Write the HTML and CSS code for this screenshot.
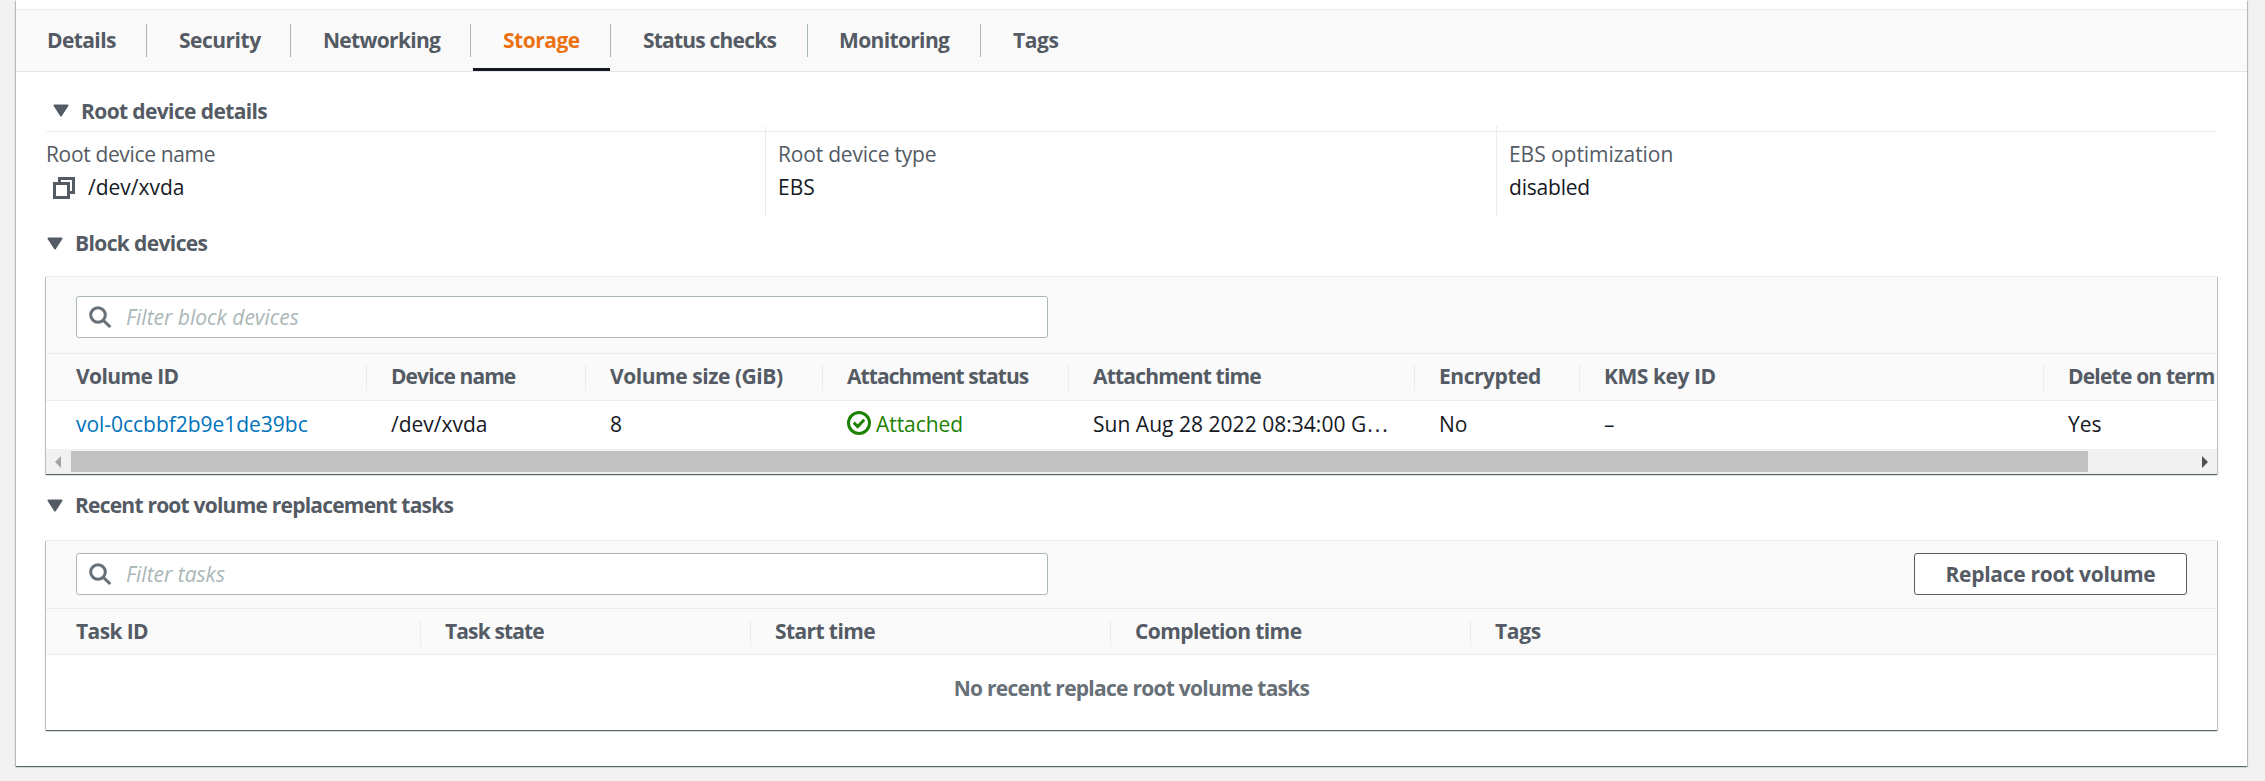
FILE: index.html
```html
<!DOCTYPE html>
<html lang="en">
<head>
<meta charset="utf-8">
<title>Instance storage</title>
<link rel="stylesheet" href="styles.css">
</head>
<body>
<main class="card">
  <nav class="tabs">
    <a class="tab tab-details"><span>Details</span></a>
    <a class="tab tab-security"><span>Security</span></a>
    <a class="tab tab-networking"><span>Networking</span></a>
    <a class="tab tab-storage active"><span>Storage</span></a>
    <a class="tab tab-status"><span>Status checks</span></a>
    <a class="tab tab-monitoring"><span>Monitoring</span></a>
    <a class="tab tab-tags"><span>Tags</span></a>
  </nav>

  <div class="content">
    <h2 class="title title-root"><svg class="caret" viewBox="0 0 16 12"><path d="M1.5 1h13L8 11z"/></svg><span>Root device details</span></h2>
    <dl class="facts">
      <div class="fact">
        <dt class="f-name">Root device name</dt>
        <dd class="copyable"><svg class="copy" viewBox="0 0 22 22"><path d="M6.5 6V1.5h14v14H16"/><path d="M1.5 6.500h14v14h-14z"/></svg><span class="dev">/dev/xvda</span></dd>
      </div>
      <div class="fact">
        <dt class="f-type">Root device type</dt>
        <dd class="ebs">EBS</dd>
      </div>
      <div class="fact">
        <dt class="f-opt">EBS optimization</dt>
        <dd class="disabled">disabled</dd>
      </div>
    </dl>

    <h2 class="title title-block"><svg class="caret" viewBox="0 0 16 12"><path d="M1.500 1h13L8 11z"/></svg><span>Block devices</span></h2>
    <section class="panel panel-block">
      <div class="toolbar">
        <div class="search"><svg class="lens" viewBox="0 0 23 22"><circle cx="9" cy="9" r="7.300"/><path d="M14.300 14.300l7 6.700"/></svg><span class="ph-block">Filter block devices</span></div>
      </div>
      <div class="row head cols-block">
        <div class="th"><span class="h-vol">Volume ID</span></div>
        <div class="th"><span class="h-dev">Device name</span></div>
        <div class="th"><span class="h-size">Volume size (GiB)</span></div>
        <div class="th"><span class="h-status">Attachment status</span></div>
        <div class="th"><span class="h-time">Attachment time</span></div>
        <div class="th"><span class="h-enc">Encrypted</span></div>
        <div class="th"><span class="h-kms">KMS key ID</span></div>
        <div class="th"><span class="h-del">Delete on term</span></div>
      </div>
      <div class="row data cols-block">
        <div class="td"><a class="link">vol-0ccbbf2b9e1de39bc</a></div>
        <div class="td"><span class="dev">/dev/xvda</span></div>
        <div class="td">8</div>
        <div class="td ok"><svg class="check" viewBox="0 0 24 24"><circle cx="12" cy="12" r="10.500"/><path d="M6.800 11.600l3.900 3.900 6.500-6.700"/></svg><span class="attached">Attached</span></div>
        <div class="td"><span class="date">Sun Aug 28 2022 08:34:00 G<span class="dots">...</span></span></div>
        <div class="td">No</div>
        <div class="td">–</div>
        <div class="td">Yes</div>
      </div>
      <div class="scrollbar">
        <svg class="arrow" viewBox="0 0 6 12"><path fill="#a3a3a3" d="M6 0v12L0 6z"/></svg>
        <div class="track"><div class="thumb"></div></div>
        <svg class="arrow" viewBox="0 0 6 12"><path fill="#505050" d="M0 0v12l6-6z"/></svg>
      </div>
    </section>

    <h2 class="title title-recent"><svg class="caret" viewBox="0 0 16 12"><path d="M1.500 1h13L8 11z"/></svg><span>Recent root volume replacement tasks</span></h2>
    <section class="panel panel-tasks">
      <div class="toolbar">
        <div class="search"><svg class="lens" viewBox="0 0 23 22"><circle cx="9" cy="9" r="7.300"/><path d="M14.300 14.300l7 6.700"/></svg><span class="ph-tasks">Filter tasks</span></div>
        <button class="button" type="button">Replace root volume</button>
      </div>
      <div class="row head cols-tasks">
        <div class="th"><span class="h-task">Task ID</span></div>
        <div class="th"><span class="h-state">Task state</span></div>
        <div class="th"><span class="h-start">Start time</span></div>
        <div class="th"><span class="h-comp">Completion time</span></div>
        <div class="th"><span class="h-tags">Tags</span></div>
      </div>
      <div class="empty"><span>No recent replace root volume tasks</span></div>
    </section>
  </div>
</main>
</body>
</html>
```

FILE: styles.css
```css
* { box-sizing: border-box; }
body {
  margin: 0;
  height: 781px;
  overflow: hidden;
  background: #f2f2f2;
  color: #16191f;
  font-family: "Open Sans", "Noto Sans", sans-serif;
  font-size: 21px;
  line-height: 30px;
  white-space: nowrap;
}
.card {
  width: 2231px;
  height: 766px;
  margin-left: 16px;
  padding-top: 9px;
  background: #fff;
  box-shadow: 0 1px 1px rgba(0, 28, 36, .45), 1px 1px 1px rgba(0, 28, 36, .2), -1px 1px 1px rgba(0, 28, 36, .2);
}
.tabs {
  display: flex;
  height: 63px;
  background: #fafafa;
  border-top: 1px solid #eaeded;
  border-bottom: 1px solid #e4e7e7;
  color: #545b64;
  font-weight: 660;
}
.tab {
  display: flex;
  position: relative;
  height: 61px;
  padding: 15px 0 0 32px;
  letter-spacing: -.5px;
}
.tab:not(:last-child)::after {
  content: "";
  position: absolute;
  right: 0;
  top: 14px;
  width: 1px;
  height: 33px;
  background: #aab7b8;
}
.tab-details { width: 131px; padding-left: 31px; letter-spacing: -.6px; }
.tab-security { width: 144px; }
.tab-networking { width: 180px; letter-spacing: -.7px; }
.tab-storage { width: 140px; }
.tab-status { width: 197px; letter-spacing: -.8px; }
.tab-monitoring { width: 173px; padding-left: 31px; letter-spacing: -.65px; }
.tab-tags { letter-spacing: -.4px; }
.tab.active { color: #ec7211; }
.tab.active::before {
  content: "";
  position: absolute;
  left: 2px;
  right: 1px;
  bottom: 0;
  height: 3px;
  background: #16191f;
}
.content { padding: 0 30px; }
.title {
  display: flex;
  align-items: center;
  margin: 0;
  height: 30px;
  color: #545b64;
  font-size: 21px;
  font-weight: 660;
  letter-spacing: -.62px;
}
.caret { width: 16px; height: 13px; margin: 0 12px 0 1px; fill: #545b64; stroke: #545b64; stroke-width: 2; stroke-linejoin: round; }
.title-root { height: 60px; padding: 19px 0 1px 6px; border-bottom: 1px solid #eaeded; }
.facts {
  display: grid;
  grid-template-columns: 719px 731px 1fr;
  height: 90px;
  margin: -6px 0 0;
}
.fact { padding: 13px 0 0 12px; border-left: 1px solid #eaeded; }
.fact:first-child { padding-left: 0; border-left: 0; }
dt { height: 33px; color: #545b64; }
dd { display: flex; margin: 0; }
.f-name { letter-spacing: -.35px; }
.f-type { letter-spacing: -.2px; }
.f-opt { letter-spacing: -.05px; }
.disabled { letter-spacing: -.2px; }
.copy { width: 22px; height: 22px; margin: 5px 13px 0 7px; fill: none; stroke: #545b64; stroke-width: 3; }
.title-block { margin-top: 12px; }
.title-recent { margin-top: 16px; letter-spacing: -.78px; }
.panel {
  width: 2171px;
  overflow: hidden;
  background: #fff;
  border-top: 1px solid #eaeded;
  box-shadow: 0 1px 1px rgba(0, 28, 36, .5), 1px 1px 1px rgba(0, 28, 36, .2), -1px 1px 1px rgba(0, 28, 36, .2);
}
.panel-block { height: 198px; margin-top: 18px; }
.panel-tasks { height: 190px; margin-top: 20px; }
.toolbar {
  display: flex;
  justify-content: space-between;
  padding: 19px 30px 15px;
  background: #fafafa;
  border-bottom: 1px solid #eaeded;
}
.panel-tasks .toolbar { padding: 12px 30px 13px; }
.search {
  display: flex;
  align-items: center;
  width: 972px;
  height: 42px;
  padding-left: 12px;
  background: #fff;
  border: 1px solid #aab7b8;
  border-radius: 3px;
  color: #aab7b8;
  font-style: italic;
}
.lens { width: 23px; height: 22px; margin-right: 14px; fill: none; stroke: #687078; stroke-width: 3; }
.button {
  width: 273px;
  height: 42px;
  padding: 0;
  background: #fff;
  border: 1px solid #545b64;
  border-radius: 3px;
  color: #545b64;
  font: 660 21px/30px "Open Sans", "Noto Sans", sans-serif;
  letter-spacing: -.3px;
}
.row { display: grid; }
.cols-block { grid-template-columns: 321px 219px 237px 246px 346px 165px 464px 173px; }
.cols-tasks { grid-template-columns: 375px 330px 360px 360px 1fr; }
.head {
  height: 47px;
  background: #fafafa;
  border-bottom: 1px solid #eaeded;
  color: #545b64;
  font-weight: 660;
}
.panel-tasks .head { height: 46px; }
.th { position: relative; padding: 7px 0 0 24px; letter-spacing: -.6px; }
.th:first-child, .td:first-child { padding-left: 30px; }
.th:not(:last-child)::after {
  content: "";
  position: absolute;
  right: 0;
  top: 11px;
  width: 1px;
  height: 26px;
  background: #eaeded;
}
.h-dev, .h-status { letter-spacing: -.92px; }
.h-state { letter-spacing: -.87px; }
.h-time, .h-del { letter-spacing: -.8px; }
.h-size { letter-spacing: -.45px; }
.h-enc, .h-kms { letter-spacing: -.45px; }
.h-tags { letter-spacing: -.3px; }
.data { height: 48px; }
.td { display: flex; padding: 8px 0 0 24px; }
.link { color: #0073bb; letter-spacing: -.03px; }
.date { letter-spacing: .03px; }
.dots { letter-spacing: 2px; margin-left: 1px; }
.ok { color: #1d8102; }
.attached { letter-spacing: -.05px; }
.check { width: 24px; height: 24px; margin: 2px 5px 0 0; fill: none; stroke: #1d8102; stroke-width: 3; }
.scrollbar { display: flex; align-items: center; height: 25px; padding: 0 9px; background: #f1f1f1; }
.arrow { width: 6px; height: 12px; }
.track { flex: 1; padding-left: 10px; }
.thumb { width: 2017px; height: 21px; background: #c1c1c1; }
.empty { padding-top: 18px; color: #687078; font-weight: 660; letter-spacing: -.74px; text-align: center; }
```
